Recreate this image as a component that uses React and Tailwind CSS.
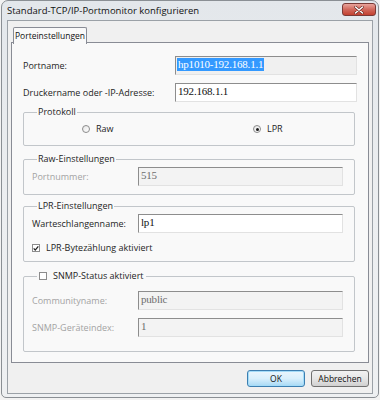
import React from "react";

const UI = { fontFamily: '"Open Sans", "Noto Sans", sans-serif' };
const SERIF = { fontFamily: '"Liberation Serif", "DejaVu Serif", serif' };

function Input({ value, variant = "white", selected = false }) {
  const bg =
    variant === "white"
      ? "bg-white text-[#111]"
      : variant === "readonly"
      ? "bg-[#f0f0f0] text-[#111]"
      : "bg-[#f3f3f3] text-[#6d6d6d]";
  return (
    <div
      className={`h-[19px] border-t border-l border-t-[#8d8d8d] border-l-[#8d8d8d] border-r border-b border-r-[#e2e2e2] border-b-[#e2e2e2] pl-[1px] pt-[1px] text-[11px] leading-[13px] tracking-[-0.2px] ${bg}`}
      style={SERIF}
    >
      {selected ? (
        <span className="bg-[#3399ff] text-white px-[1px] inline-block">{value}</span>
      ) : (
        <span className="px-[1px]">{value}</span>
      )}
    </div>
  );
}

function Radio({ checked }) {
  return (
    <div className="w-[8px] h-[8px] rounded-full border border-[#8c8c8c] bg-gradient-to-br from-[#e6e6e6] to-white flex items-center justify-center shrink-0">
      {checked && <div className="w-[3px] h-[3px] rounded-full bg-[#1b1b1b]" />}
    </div>
  );
}

function Checkbox({ checked }) {
  return (
    <div className="w-[8px] h-[8px] border border-[#8c8c8c] bg-white flex items-center justify-center shrink-0">
      {checked && (
        <svg width="7" height="7" viewBox="0 0 7 7">
          <path d="M0.8 3.4 L2.6 5.4 L6.2 1" stroke="#222" strokeWidth="1.5" fill="none" />
        </svg>
      )}
    </div>
  );
}

function Group({ legend, children, className = "" }) {
  return (
    <div className={`mr-[2px] border border-[#c2c6ca] rounded-[2px] pl-[8px] pr-[11px] ${className}`}>
      <div className="-mt-[7px] ml-[5px] w-fit px-[1px] bg-[#f9f9f9] text-[9px] leading-[12px] text-[#1e1e1e]">
        {legend}
      </div>
      {children}
    </div>
  );
}

function Row({ label, children, disabled, className = "" }) {
  return (
    <div className={`flex items-center ${className}`}>
      <div className={`w-[106px] text-[9px] leading-[12px] ${disabled ? "text-[#a3a3a3]" : "text-[#1e1e1e]"}`}>
        {label}
      </div>
      <div className="w-[205px]">{children}</div>
    </div>
  );
}

export default function App() {
  return (
    <div className="w-[380px] h-[400px] bg-[#f2f2f2] overflow-hidden" style={UI}>
      <div className="ml-[1px] w-[378px] h-[398px] rounded-t-[7px] rounded-b-[5px] border border-[#8a8f94] bg-gradient-to-b from-[#e3e7eb] via-[#eceef0] to-[#eef0f2] flex flex-col px-[5px] pb-[3px]">
        {/* Title bar */}
        <div className="h-[19px] flex items-start shrink-0">
          <span className="mt-[3px] text-[9.5px] leading-[13px] text-[#111]">
            Standard-TCP/IP-Portmonitor konfigurieren
          </span>
          <div className="ml-auto -mr-[3px] mt-[2px] w-[34px] h-[13px] rounded-[3px] border border-[#7a3a36] bg-gradient-to-b from-[#e8a49c] via-[#d1685c] to-[#c2402f] flex items-center justify-center">
            <svg width="10" height="8" viewBox="0 0 10 8">
              <path d="M1.5 1 L8.5 7 M8.5 1 L1.5 7" stroke="#5a1b14" strokeWidth="2.6" strokeLinecap="round" />
              <path d="M1.5 1 L8.5 7 M8.5 1 L1.5 7" stroke="#ffffff" strokeWidth="1.6" strokeLinecap="round" />
            </svg>
          </div>
        </div>

        {/* Client area */}
        <div className="flex-1 border border-[#9ba1a7] bg-[#f0f0f0] px-[3px] pt-[6px] flex flex-col">
          {/* Tab strip */}
          <div className="flex h-[16px] -mb-[1px] relative z-10">
            <div className="ml-[2px] w-[74px] h-[17px] border border-[#898c95] border-b-0 bg-[#f9f9f9] rounded-t-[2px] text-[8.5px] leading-[15px] text-center text-[#111]">
              Porteinstellungen
            </div>
          </div>

          {/* Tab panel */}
          <div className="h-[321px] border border-[#898c95] bg-[#f9f9f9] px-[11px] pt-[13px] flex flex-col">
            <div className="flex items-center">
              <div className="flex-1 text-[9px] leading-[12px] text-[#1e1e1e]">Portname:</div>
              <div className="w-[182px]">
                <Input value="hp1010-192.168.1.1" variant="readonly" selected />
              </div>
            </div>
            <div className="flex items-center mt-[8px]">
              <div className="flex-1 text-[9px] leading-[12px] text-[#1e1e1e]">Druckername oder -IP-Adresse:</div>
              <div className="w-[182px]">
                <Input value="192.168.1.1" />
              </div>
            </div>

            <Group legend="Protokoll" className="mt-[10px] pb-[10px]">
              <div className="flex items-center h-[12px] mt-[5px] text-[9px] text-[#1e1e1e]">
                <div className="ml-[50px] w-[171px] flex items-center gap-[6px]">
                  <Radio />
                  <span>Raw</span>
                </div>
                <div className="flex items-center gap-[6px]">
                  <Radio checked />
                  <span>LPR</span>
                </div>
              </div>
            </Group>

            <Group legend="Raw-Einstellungen" className="mt-[13px] pb-[8px]">
              <Row label="Portnummer:" disabled className="mt-[2px]">
                <Input value="515" variant="disabled" />
              </Row>
            </Group>

            <Group legend="LPR-Einstellungen" className="mt-[11px] pb-[7px]">
              <Row label="Warteschlangenname:" className="mt-[2px]">
                <Input value="lp1" />
              </Row>
              <div className="flex items-center gap-[6px] h-[12px] mt-[9px] text-[9px] text-[#1e1e1e]">
                <Checkbox checked />
                <span>LPR-Bytezählung aktiviert</span>
              </div>
            </Group>

            <Group
              legend={
                <span className="flex items-center gap-[6px] px-[1px]">
                  <Checkbox />
                  <span>SNMP-Status aktiviert</span>
                </span>
              }
              className="mt-[14px] pb-[14px]"
            >
              <Row label="Communityname:" disabled className="mt-[9px]">
                <Input value="public" variant="disabled" />
              </Row>
              <Row label="SNMP-Geräteindex:" disabled className="mt-[8px]">
                <Input value="1" variant="disabled" />
              </Row>
            </Group>
          </div>

          {/* Buttons */}
          <div className="flex justify-end gap-[6px] mt-[7px]">
            <div className="w-[58px] h-[17px] rounded-[3px] border border-[#3c7fb1] bg-gradient-to-b from-[#eaf6fd] via-[#d9f0fc] to-[#a7d9f5] shadow-[inset_0_0_0_1px_#a4dcf8] text-[8.5px] leading-[15px] text-center text-[#111]">
              OK
            </div>
            <div className="w-[58px] h-[17px] rounded-[3px] border border-[#707070] bg-gradient-to-b from-[#f2f2f2] via-[#e6e6e6] to-[#d0d0d0] text-[8.5px] leading-[15px] text-center text-[#111]">
              Abbrechen
            </div>
          </div>
        </div>
      </div>
    </div>
  );
}
